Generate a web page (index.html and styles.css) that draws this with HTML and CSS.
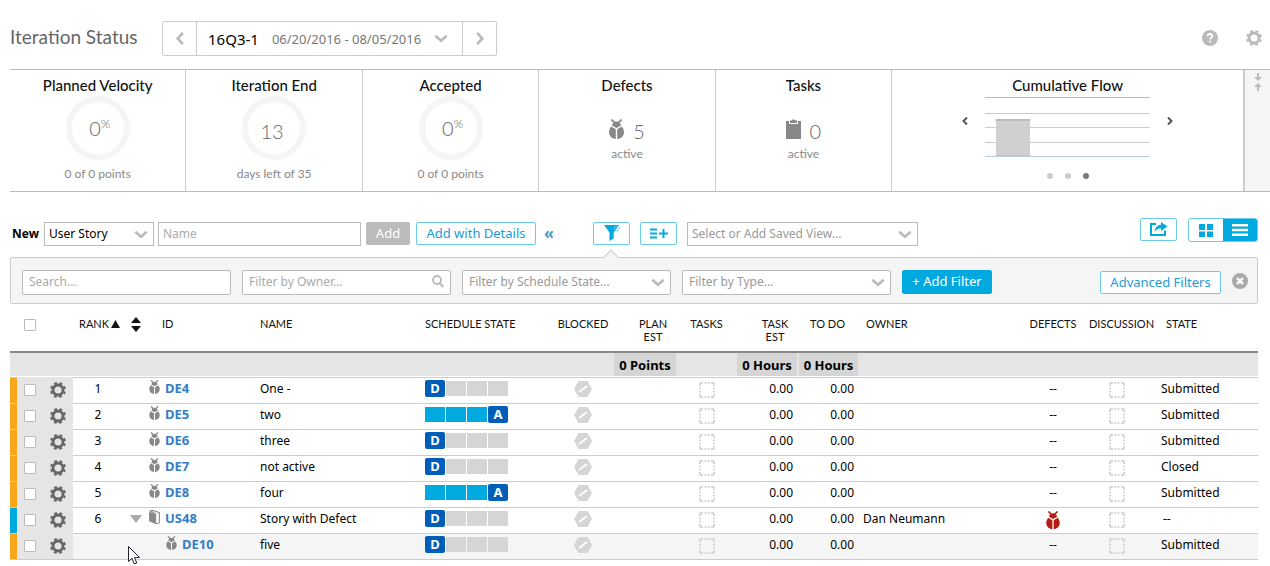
FILE: index.html
```html
<!DOCTYPE html>
<html lang="en">
<head>
<meta charset="utf-8">
<title>Iteration Status</title>
<link rel="stylesheet" href="styles.css">
</head>
<body>
<svg class="sprite" aria-hidden="true">
  <symbol id="gear" viewBox="0 0 16 16"><g fill="none" stroke="currentColor"><circle cx="8" cy="8" r="5" stroke-width="2.800"/><circle cx="8" cy="8" r="7" stroke-width="2" stroke-dasharray="2.900 2.598" stroke-dashoffset="1.450" transform="rotate(22.500 8 8)"/></g></symbol>
  <symbol id="bug" viewBox="0 0 15 20"><path d="M2.500 .5L5.500 3.600M12.500 .5L9.500 3.600" fill="none" stroke="currentColor" stroke-width="1.800"/><path d="M7.500 2.400C9.800 2.400 11.800 4.300 12 6.400L7.500 9L3 6.400C3.200 4.300 5.200 2.400 7.500 2.400Z"/><path d="M2.200 7.400L6.800 10.200V20C2.800 19.800 0 16.900 0 13.200C0 11 .9 9 2.200 7.400ZM12.800 7.400L8.200 10.200V20C12.200 19.800 15 16.900 15 13.200C15 11 14.100 9 12.800 7.400Z"/></symbol>
  <symbol id="chevron" viewBox="0 0 12 8"><path d="M1 1.500L6 6L11 1.500" fill="none" stroke="currentColor" stroke-width="2.400"/></symbol>
  <symbol id="blocked" viewBox="0 0 18 16"><path d="M4.500 0H13.500L18 8L13.500 16H4.500L0 8Z"/><path d="M5 11L13 5" stroke="#fff" stroke-width="1.800"/></symbol>
  <symbol id="empty" viewBox="0 0 16 16"><path d="M1 4V2L2 1H4M12 1H14L15 2V4M15 12V14L14 15H12M4 15H2L1 14V12M5.500 1H7.300M8.700 1H10.500M5.500 15H7.300M8.700 15H10.500M1 5.500V7.300M1 8.700V10.500M15 5.500V7.300M15 8.700V10.500" fill="none" stroke="currentColor" stroke-width="2"/></symbol>
</svg>

<header class="top">
  <h1>Iteration Status</h1>
  <div class="picker">
    <button class="step" aria-label="Previous iteration"><svg class="chev left"><use href="#chevron"/></svg></button>
    <button class="current"><span class="iter">16Q3-1</span><span class="dates">06/20/2016 - 08/05/2016</span><svg class="chev"><use href="#chevron"/></svg></button>
    <button class="step" aria-label="Next iteration"><svg class="chev right"><use href="#chevron"/></svg></button>
  </div>
  <div class="tools">
    <button class="plain" aria-label="Help"><svg width="16" height="16" viewBox="0 0 16 16"><circle cx="8" cy="8" r="8"/><path d="M5.700 6.200C5.700 3.300 10.300 3.300 10.300 6.100C10.300 7.700 8.100 7.800 8.100 9.500M8.100 10.700V12.600" fill="none" stroke="#fff" stroke-width="1.800"/></svg></button>
    <button class="plain" aria-label="Settings"><svg width="16" height="16"><use href="#gear"/></svg></button>
  </div>
</header>

<section class="metrics">
  <article class="card"><h2>Planned Velocity</h2><div class="ring">0<sup>%</sup></div><p>0 of 0 points</p></article>
  <article class="card"><h2>Iteration End</h2><div class="ring days">13</div><p>days left of 35</p></article>
  <article class="card"><h2>Accepted</h2><div class="ring">0<sup>%</sup></div><p>0 of 0 points</p></article>
  <article class="card"><h2>Defects</h2><div class="count"><svg width="15" height="20"><use href="#bug"/></svg><span>5</span></div><p>active</p></article>
  <article class="card"><h2>Tasks</h2><div class="count"><svg width="15" height="20" viewBox="0 0 15 20"><path d="M0 2H3V5H12V2H15V20H0Z"/><path d="M4 1.500H5.700C6 .2 9 .2 9.300 1.500H11V4H4Z"/></svg><span>0</span></div><p>active</p></article>
  <article class="card flow"><h2>Cumulative Flow</h2>
    <div class="carousel">
      <button class="plain" aria-label="Previous chart"><svg width="6" height="8" viewBox="0 0 6 8"><path d="M5 .5L1.500 4L5 7.500"/></svg></button>
      <svg class="chart" width="165" height="62" viewBox="0 0 165 62"><path d="M0 1.500H165" stroke="#bbb"/><path d="M0 17.500H165M0 31.500H165M0 46.500H165" stroke="#ccc"/><path d="M0 60.500H165" stroke="#b8cce4"/><rect x="11" y="23" width="34" height="37" fill="#ccc" fill-opacity=".93"/><path d="M10.500 24H45.500" stroke="#bbb" stroke-width="2"/><path d="M10.500 59.500H45.500" stroke="#f2cf25"/></svg>
      <button class="plain" aria-label="Next chart"><svg width="6" height="8" viewBox="0 0 6 8"><path d="M1 .5L4.500 4L1 7.500"/></svg></button>
    </div>
    <div class="dots"><i></i><i></i><i class="on"></i></div>
  </article>
  <button class="collapse" aria-label="Collapse"><svg width="8" height="18" viewBox="0 0 8 18"><path d="M3 0H5V4H8L4 8L0 4H3ZM4 10L8 14H5V18H3V14H0Z"/></svg></button>
</section>

<section class="toolbar">
  <label class="new" for="kind">New</label>
  <div class="drop kind"><select id="kind"><option>User Story</option></select><svg class="chev"><use href="#chevron"/></svg></div>
  <input class="name" type="text" placeholder="Name" aria-label="Name">
  <button class="btn add">Add</button>
  <button class="btn details">Add with Details</button>
  <button class="hide" aria-label="Hide">«</button>
  <button class="btn icon filter-toggle" aria-label="Filters"><svg width="16" height="16" viewBox="0 0 16 16"><path d="M0 0H15L9.700 7.500V13.500L5.500 16V7.500Z"/><circle cx="12.800" cy="3.500" r="2.500" fill="none" stroke="#6bcbed"/></svg></button>
  <button class="btn icon fields" aria-label="Show fields"><svg width="18" height="11" viewBox="0 0 18 11"><path d="M0 1.500H7M0 5.500H7M0 9.500H7M9 5.500H18M13.500 1V10" fill="none" stroke="currentColor" stroke-width="2"/></svg></button>
  <div class="drop view"><select aria-label="Saved view"><option>Select or Add Saved View...</option></select><svg class="chev"><use href="#chevron"/></svg></div>
  <div class="display">
    <button class="btn icon" aria-label="Share"><svg width="18" height="14" viewBox="0 0 18 14"><path d="M6 2H1V13H15V8.500" fill="none" stroke="currentColor" stroke-width="2"/><path d="M11 0L17.500 4.500L11 9V6.300C8 6.300 6 7.500 4.500 10C4.800 5.800 7.300 3 11 2.700Z"/></svg></button>
    <div class="toggle">
      <button aria-label="Board view"><svg width="14" height="13" viewBox="0 0 14 13"><path d="M0 0H6V6H0ZM8 0H14V6H8ZM0 7.500H6V13H0ZM8 7.500H14V13H8Z"/></svg></button>
      <button class="on" aria-label="List view"><svg width="16" height="12" viewBox="0 0 16 12"><path d="M0 0H16V2.500H0ZM0 4.750H16V7.250H0ZM0 9.500H16V12H0Z"/></svg></button>
    </div>
  </div>
</section>

<section class="filters">
  <input type="text" placeholder="Search..." aria-label="Search">
  <div class="drop"><input type="text" placeholder="Filter by Owner..." aria-label="Filter by Owner"><svg class="lens" viewBox="0 0 12 13"><circle cx="5" cy="5" r="4" fill="none" stroke="currentColor" stroke-width="1.800"/><path d="M7.800 8L11.200 12" stroke="currentColor" stroke-width="2.200"/></svg></div>
  <div class="drop"><select aria-label="Filter by Schedule State"><option>Filter by Schedule State...</option></select><svg class="chev"><use href="#chevron"/></svg></div>
  <div class="drop"><select aria-label="Filter by Type"><option>Filter by Type...</option></select><svg class="chev"><use href="#chevron"/></svg></div>
  <button class="btn solid">+ Add Filter</button>
  <button class="btn advanced">Advanced Filters</button>
  <button class="plain" aria-label="Close filters"><svg width="16" height="16" viewBox="0 0 16 16"><circle cx="8" cy="8" r="8"/><path d="M5 5L11 11M11 5L5 11" stroke="#fff" stroke-width="2.400"/></svg></button>
</section>

<table class="grid">
  <colgroup><col class="c-strip"><col class="c-check"><col class="c-gear"><col class="c-rank"><col class="c-tree"><col class="c-id"><col><col class="c-sched"><col class="c-block"><col class="c-plan"><col class="c-tasks"><col class="c-est"><col class="c-todo"><col class="c-owner"><col class="c-def"><col class="c-disc"><col class="c-state"></colgroup>
  <thead>
    <tr><th></th><th class="mid"><input type="checkbox" aria-label="Select all"></th><th></th><th class="rank">RANK<svg width="9" height="8" viewBox="0 0 9 8"><path d="M4.500 0L9 8H0Z"/></svg></th><th class="mid"><svg width="10" height="15" viewBox="0 0 10 15"><path d="M5 0L10 6H0ZM0 9H10L5 15Z"/></svg></th><th class="idh">ID</th><th>NAME</th><th>SCHEDULE STATE</th><th class="mid">BLOCKED</th><th class="est">PLAN<br>EST</th><th class="mid">TASKS</th><th class="est">TASK<br>EST</th><th class="mid">TO DO</th><th class="ownerh">OWNER</th><th class="mid">DEFECTS</th><th class="disch">DISCUSSION</th><th class="stateh">STATE</th></tr>
    <tr class="sum"><td colspan="9"></td><td class="tot">0 Points</td><td></td><td class="tot">0 Hours</td><td class="tot split">0 Hours</td><td colspan="4"></td></tr>
  </thead>
  <tbody>
    <tr><td class="strip"></td><td class="act"><input type="checkbox" aria-label="Select DE4"></td><td class="act"><button class="plain" aria-label="DE4 actions"><svg width="16" height="16"><use href="#gear"/></svg></button></td><td class="mid">1</td><td></td><td class="id"><svg class="bug"><use href="#bug"/></svg><a href="#DE4">DE4</a></td><td>One -</td><td><div class="sched"><b>D</b><i></i><i></i><i></i></div></td><td class="mid pale"><svg width="18" height="16"><use href="#blocked"/></svg></td><td></td><td class="mid pale box"><svg width="16" height="16"><use href="#empty"/></svg></td><td class="num">0.00</td><td class="num">0.00</td><td></td><td class="mid">--</td><td class="mid pale box"><svg width="16" height="16"><use href="#empty"/></svg></td><td>Submitted</td></tr>
    <tr><td class="strip"></td><td class="act"><input type="checkbox" aria-label="Select DE5"></td><td class="act"><button class="plain" aria-label="DE5 actions"><svg width="16" height="16"><use href="#gear"/></svg></button></td><td class="mid">2</td><td></td><td class="id"><svg class="bug"><use href="#bug"/></svg><a href="#DE5">DE5</a></td><td>two</td><td><div class="sched done"><i></i><i></i><i></i><b>A</b></div></td><td class="mid pale"><svg width="18" height="16"><use href="#blocked"/></svg></td><td></td><td class="mid pale box"><svg width="16" height="16"><use href="#empty"/></svg></td><td class="num">0.00</td><td class="num">0.00</td><td></td><td class="mid">--</td><td class="mid pale box"><svg width="16" height="16"><use href="#empty"/></svg></td><td>Submitted</td></tr>
    <tr><td class="strip"></td><td class="act"><input type="checkbox" aria-label="Select DE6"></td><td class="act"><button class="plain" aria-label="DE6 actions"><svg width="16" height="16"><use href="#gear"/></svg></button></td><td class="mid">3</td><td></td><td class="id"><svg class="bug"><use href="#bug"/></svg><a href="#DE6">DE6</a></td><td>three</td><td><div class="sched"><b>D</b><i></i><i></i><i></i></div></td><td class="mid pale"><svg width="18" height="16"><use href="#blocked"/></svg></td><td></td><td class="mid pale box"><svg width="16" height="16"><use href="#empty"/></svg></td><td class="num">0.00</td><td class="num">0.00</td><td></td><td class="mid">--</td><td class="mid pale box"><svg width="16" height="16"><use href="#empty"/></svg></td><td>Submitted</td></tr>
    <tr><td class="strip"></td><td class="act"><input type="checkbox" aria-label="Select DE7"></td><td class="act"><button class="plain" aria-label="DE7 actions"><svg width="16" height="16"><use href="#gear"/></svg></button></td><td class="mid">4</td><td></td><td class="id"><svg class="bug"><use href="#bug"/></svg><a href="#DE7">DE7</a></td><td>not active</td><td><div class="sched"><b>D</b><i></i><i></i><i></i></div></td><td class="mid pale"><svg width="18" height="16"><use href="#blocked"/></svg></td><td></td><td class="mid pale box"><svg width="16" height="16"><use href="#empty"/></svg></td><td class="num">0.00</td><td class="num">0.00</td><td></td><td class="mid">--</td><td class="mid pale box"><svg width="16" height="16"><use href="#empty"/></svg></td><td>Closed</td></tr>
    <tr><td class="strip"></td><td class="act"><input type="checkbox" aria-label="Select DE8"></td><td class="act"><button class="plain" aria-label="DE8 actions"><svg width="16" height="16"><use href="#gear"/></svg></button></td><td class="mid">5</td><td></td><td class="id"><svg class="bug"><use href="#bug"/></svg><a href="#DE8">DE8</a></td><td>four</td><td><div class="sched done"><i></i><i></i><i></i><b>A</b></div></td><td class="mid pale"><svg width="18" height="16"><use href="#blocked"/></svg></td><td></td><td class="mid pale box"><svg width="16" height="16"><use href="#empty"/></svg></td><td class="num">0.00</td><td class="num">0.00</td><td></td><td class="mid">--</td><td class="mid pale box"><svg width="16" height="16"><use href="#empty"/></svg></td><td>Submitted</td></tr>
    <tr><td class="strip story"></td><td class="act"><input type="checkbox" aria-label="Select US48"></td><td class="act"><button class="plain" aria-label="US48 actions"><svg width="16" height="16"><use href="#gear"/></svg></button></td><td class="mid">6</td><td class="mid"><button class="plain caret" aria-label="Collapse US48"><svg width="12" height="8" viewBox="0 0 12 8"><path d="M0 0H12L6 8Z"/></svg></button></td><td class="id"><svg class="bug" viewBox="0 0 10 13"><path d="M0 1.500L6 4V13L0 10.500Z"/><path d="M1 .8L4 .5L9.500 2.500V12L6 12.800V3.600Z" fill="none" stroke="#888"/></svg><a href="#US48">US48</a></td><td>Story with Defect</td><td><div class="sched"><b>D</b><i></i><i></i><i></i></div></td><td class="mid pale"><svg width="18" height="16"><use href="#blocked"/></svg></td><td></td><td class="mid pale box"><svg width="16" height="16"><use href="#empty"/></svg></td><td class="num">0.00</td><td class="num">0.00</td><td class="owner">Dan Neumann</td><td class="mid red box"><svg width="14" height="18"><use href="#bug"/></svg></td><td class="mid pale box"><svg width="16" height="16"><use href="#empty"/></svg></td><td class="none">--</td></tr>
    <tr class="child"><td class="strip"></td><td class="act"><input type="checkbox" aria-label="Select DE10"></td><td class="act"><button class="plain" aria-label="DE10 actions"><svg width="16" height="16"><use href="#gear"/></svg></button></td><td></td><td></td><td class="id"><svg class="bug"><use href="#bug"/></svg><a href="#DE10">DE10</a></td><td>five</td><td><div class="sched"><b>D</b><i></i><i></i><i></i></div></td><td class="mid pale"><svg width="18" height="16"><use href="#blocked"/></svg></td><td></td><td class="mid pale box"><svg width="16" height="16"><use href="#empty"/></svg></td><td class="num">0.00</td><td class="num">0.00</td><td></td><td class="mid">--</td><td class="mid pale box"><svg width="16" height="16"><use href="#empty"/></svg></td><td>Submitted</td></tr>
  </tbody>
</table>
<svg class="cursor" width="12" height="20" viewBox="0 0 12 20" aria-hidden="true"><path d="M.5 .5V15.500L4 12.300L6.300 18L8.800 17L6.500 11.500H11.500Z" fill="#fff" stroke="#223"/></svg>
</body>
</html>
```

FILE: styles.css
```css
* { box-sizing: border-box; }
body { position: relative; min-height: 100vh; margin: 0; padding: 21px 0 0 10px; background: #fff; color: #000; font: 12px/18px "Noto Sans", "Open Sans", sans-serif; }
svg { display: block; fill: currentColor; }
.sprite { position: absolute; width: 0; height: 0; }
button, input, select { font: inherit; color: inherit; margin: 0; }
button { padding: 0; border: 0; background: none; cursor: pointer; }
.plain { display: inline-flex; align-items: center; justify-content: center; color: inherit; }
h1, h2, p { margin: 0; font-weight: 400; }
.chev { width: 14px; height: 9px; color: #bbb; flex: none; }
.left { transform: rotate(90deg); }
.right { transform: rotate(-90deg); }

.top { display: flex; align-items: center; height: 35px; padding-right: 8px; }
h1 { width: 152px; font: 19px/24px Lato, sans-serif; color: #666; padding-bottom: 4px; }
.picker { display: flex; height: 35px; border: 1px solid #ccc; border-radius: 2px; }
.step { width: 33px; display: flex; align-items: center; justify-content: center; }
.current { display: flex; align-items: center; border: solid #ccc; border-width: 0 1px; padding: 0 14px 0 11px; gap: 13px; }
.iter { font-size: 15px; }
.dates { font-size: 13px; color: #777; }
.tools { display: flex; gap: 28px; margin-left: auto; padding-bottom: 2px; color: #bbb; }

.metrics { display: grid; grid-template-columns: repeat(5, 1fr) 2fr 25px; height: 123px; margin-top: 13px; border: solid #bbb; border-width: 1px 0; }
.card { border-right: 1px solid #ccc; display: flex; flex-direction: column; align-items: center; padding-top: 6px; color: #666; }
h2 { font: 500 15px/18px Lato, sans-serif; color: #111; }
.card p { font: 12px/16px Lato, sans-serif; color: #888; }
.ring { width: 64px; height: 64px; margin: 2px 0 6px; border: 6px solid #f5f5f5; border-radius: 50%; display: flex; justify-content: center; align-items: center; padding-left: 4px; font: 300 20px/20px Lato, sans-serif; }
.ring sup { font-size: 12px; line-height: 12px; padding-bottom: 8px; }
.days { padding: 6px 4px 0 0; }
.count { display: flex; align-items: center; gap: 9px; height: 40px; margin: 17px 0 -5px; font: 300 20px/24px Lato, sans-serif; }
.count svg { color: #888; margin-bottom: 4px; }
.flow { border-right-width: 2px; }
.carousel { display: flex; align-items: center; gap: 17px; margin-top: 2px; }
.carousel .plain { padding-bottom: 12px; }
.carousel button svg { fill: none; stroke: #555; stroke-width: 2; }
.dots { display: flex; gap: 12px; margin-top: 15px; }
.dots i { width: 6px; height: 6px; border-radius: 50%; background: #ccc; }
.dots .on { background: #777; }
.collapse { background: #f5f5f5; color: #bbb; display: flex; justify-content: center; padding-top: 3px; }

.toolbar { display: flex; align-items: flex-start; margin: 30px 12px 0 0; font-size: 13px; height: 35px; }
.new { width: 34px; padding-left: 2px; font-weight: 700; font-size: 12px; line-height: 24px; }
input[type=text], select { height: 24px; width: 100%; border: 1px solid #bbb; border-radius: 0; background: #fff; padding: 0 4px; outline: 0; appearance: none; font-size: 12px; }
.toolbar input[type=text] { padding-bottom: 2px; }
::placeholder { color: #aaa; opacity: 1; }
.drop { position: relative; }
.drop .chev, .lens { position: absolute; right: 6px; top: 8px; pointer-events: none; }
.drop .lens { right: 7px; top: 5px; width: 12px; height: 13px; color: #bbb; }
.kind { width: 110px; }
.toolbar .name { width: 203px; margin: 0 5px 0 4px; }
.btn { height: 23px; border: 1px solid #6bcbed; border-radius: 2px; background: #fff; color: #1a9bd7; font-size: 13px; padding-bottom: 1px; line-height: 20px; white-space: nowrap; }
.add { width: 44px; background: #bbb; border-color: #bbb; color: #fff; }
.details { width: 120px; margin-left: 6px; }
.hide { width: 26px; color: #4a9cc7; font-size: 16px; font-weight: 700; line-height: 22px; }
.icon { width: 37px; color: #00a9e0; display: flex; align-items: center; justify-content: center; }
.filter-toggle { margin-left: 31px; }
.fields { margin: 0 10px; }
.view { width: 231px; }
.view select, .filters select { color: #999; }
.display { display: flex; gap: 11px; margin: -4px 0 0 auto; }
.toggle { display: flex; width: 70px; height: 24px; border: 1px solid #6bcbed; border-radius: 3px; overflow: hidden; color: #00a9e0; }
.toggle button { flex: 1; display: flex; align-items: center; justify-content: center; }
.toggle .on { background: #00a9e0; color: #fff; }

.filters { position: relative; display: flex; gap: 11px; height: 47px; margin-right: 12px; padding: 12px 9px 0 11px; background: #f5f5f5; border: 1px solid #ccc; border-radius: 2px; }
.filters::before { content: ""; position: absolute; left: 594px; top: -6px; width: 11px; height: 11px; background: #f5f5f5; border: solid #ccc; border-width: 1px 0 0 1px; transform: rotate(45deg); }
.filters input[type=text], .filters select { height: 25px; border-radius: 2px; padding: 0 6px 2px; }
.filters > input[type=text], .filters > .drop { width: 209px; flex: 0 1 209px; }
.solid { width: 90px; height: 24px; background: #00a9e0; border-color: #00a9e0; color: #fff; padding-bottom: 2px; }
.advanced { width: 121px; margin: 1px 0 0 auto; }
.filters .plain { height: 22px; color: #aaa; }

.grid { width: calc(100% - 12px); table-layout: fixed; border-collapse: separate; border-spacing: 0; }
.c-strip { width: 7px; } .c-check { width: 25px; } .c-gear { width: 31px; } .c-rank { width: 50px; }
.c-tree { width: 25px; } .c-id { width: 105px; } .c-sched { width: 134px; } .c-block { width: 62px; }
.c-plan { width: 62px; } .c-tasks { width: 61px; } .c-est { width: 60px; } .c-todo { width: 61px; }
.c-owner { width: 168px; } .c-def { width: 54px; } .c-disc { width: 74px; } .c-state { width: 104px; }
th { height: 49px; padding: 13px 0 0 7px; vertical-align: top; text-align: left; border-bottom: 2px solid #888; font: 11px/13px Lato, sans-serif; color: #111; white-space: nowrap; }
th.mid, .mid { text-align: center; padding-left: 0; padding-right: 0; }
.mid svg { margin: 0 auto; }
.rank svg { display: inline-block; margin-left: 2px; }
th.rank { padding-left: 6px; }
th.idh { padding-left: 14px; }
th.est { text-align: center; padding-left: 16px; }
th.ownerh { padding-left: 8px; }
th.disch { padding-left: 9px; }
th.stateh { padding-left: 12px; }
td { height: 26px; padding: 0 0 4px 7px; border-top: 1px solid #ccc; vertical-align: middle; white-space: nowrap; }
.sum td { height: 24px; padding: 0; border: 0; border-bottom: 1px solid #fff; background: #e5e5e5; text-align: center; font-size: 13px; font-weight: 700; }
.sum .tot { background: #d5d5d5; }
.sum .split { border-left: 2px solid #e5e5e5; }
.strip { background: #faa61a; }
.story { background: #00a9e0; }
td.act { background: #e5e5e5; border-top-color: #e5e5e5; color: #666; text-align: center; padding: 0 0 2px; }
.act .plain { vertical-align: middle; }
td.box { padding-bottom: 2px; }
input[type=checkbox] { appearance: none; width: 12px; height: 12px; margin: 0; border: 1px solid #bbb; border-radius: 1px; background: #fff; vertical-align: middle; }
.id svg { display: inline-block; width: 11px; height: 14px; margin: 0 5px 0 -6px; color: #888; vertical-align: -1px; }
.id a { color: #337ec9; font-size: 13px; font-weight: 700; text-decoration: none; }
.child td.id { padding-left: 24px; }
.num { text-align: right; padding-right: 4px; }
.owner { padding-left: 5px; }
.pale { color: #d5d5d5; }
.red { color: #b71c12; }
.caret { color: #aaa; }
td.none { padding-left: 9px; }
.sched { display: flex; gap: 1px; align-items: center; height: 17px; }
.sched i { width: 20px; height: 15px; background: #d5d5d5; }
.sched b { width: 20px; height: 17px; border-radius: 2px; background: #005eb8; color: #fff; font: 700 13px/17px "Noto Sans", sans-serif; text-align: center; }
.done i { background: #00a9e0; }
.child td { background: #f5f5f5; border-bottom: 1px solid #ccc; height: 27px; }
.child td.act { background: #e5e5e5; }
.child td.strip { background: #faa61a; }
.cursor { position: absolute; left: 128px; top: 546px; }
```
